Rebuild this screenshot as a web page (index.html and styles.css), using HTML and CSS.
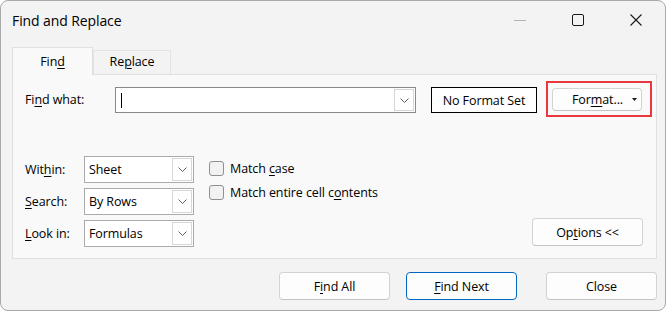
FILE: index.html
```html
<!DOCTYPE html>
<html lang="en">
<head>
    <meta charset="UTF-8">
    <title>Find and Replace</title>
    <link rel="stylesheet" href="styles.css">
</head>
<body>
    <div class="window">
        <div class="titlebar">
            <span class="title">Find and Replace</span>
            <div class="controls">
                <span class="ctl">
                    <svg width="12" height="12" viewBox="0 0 12 12"><path d="M0 6.5h12" stroke="#b4b4b4" stroke-width="1"/></svg>
                </span>
                <span class="ctl">
                    <svg width="12" height="12" viewBox="0 0 12 12"><rect x="0.5" y="0.5" width="11" height="11" rx="1.5" fill="none" stroke="#1a1a1a" stroke-width="1"/></svg>
                </span>
                <span class="ctl">
                    <svg width="12" height="12" viewBox="0 0 12 12"><path d="M0.5 0.5l11 11M11.5 0.5l-11 11" stroke="#1a1a1a" stroke-width="1.1"/></svg>
                </span>
            </div>
        </div>

        <div class="tabs">
            <div class="tab active">Fin<u>d</u></div>
            <div class="tab">Re<u>p</u>lace</div>
        </div>

        <div class="panel">
            <div class="find-row">
                <span class="find-label">Fi<u>n</u>d what:</span>
                <div class="combo">
                    <span class="caret"></span>
                    <span class="drop">
                        <svg width="9" height="5" viewBox="0 0 9 5"><path d="M0.5 0.5l4 4 4-4" fill="none" stroke="#606060" stroke-width="1"/></svg>
                    </span>
                </div>
                <div class="format-box">No Format Set</div>
                <div class="highlight">
                    <button class="btn format-btn">
                        <span>For<u>m</u>at...</span>
                        <svg width="5" height="3" viewBox="0 0 5 3"><path d="M0 0h5L2.5 3z" fill="#1a1a1a"/></svg>
                    </button>
                </div>
            </div>

            <div class="lower">
                <div class="option-grid">
                    <span class="opt-label">Wit<u>h</u>in:</span>
                    <div class="select">
                        <span class="select-value">Sheet</span>
                        <span class="drop">
                            <svg width="9" height="5" viewBox="0 0 9 5"><path d="M0.5 0.5l4 4 4-4" fill="none" stroke="#606060" stroke-width="1"/></svg>
                        </span>
                    </div>
                    <span class="opt-label"><u>S</u>earch:</span>
                    <div class="select">
                        <span class="select-value">By Rows</span>
                        <span class="drop">
                            <svg width="9" height="5" viewBox="0 0 9 5"><path d="M0.5 0.5l4 4 4-4" fill="none" stroke="#606060" stroke-width="1"/></svg>
                        </span>
                    </div>
                    <span class="opt-label"><u>L</u>ook in:</span>
                    <div class="select">
                        <span class="select-value">Formulas</span>
                        <span class="drop">
                            <svg width="9" height="5" viewBox="0 0 9 5"><path d="M0.5 0.5l4 4 4-4" fill="none" stroke="#606060" stroke-width="1"/></svg>
                        </span>
                    </div>
                </div>

                <div class="checks">
                    <label class="check"><span class="box"></span><span>Match <u>c</u>ase</span></label>
                    <label class="check"><span class="box"></span><span>Match entire cell c<u>o</u>ntents</span></label>
                </div>

                <button class="btn options-btn">Op<u>t</u>ions &lt;&lt;</button>
            </div>
        </div>

        <div class="actions">
            <button class="btn action-btn">F<u>i</u>nd All</button>
            <button class="btn action-btn primary"><u>F</u>ind Next</button>
            <button class="btn action-btn close-btn">Close</button>
        </div>
    </div>
</body>
</html>
```

FILE: styles.css
```css
* {
    box-sizing: border-box;
}
body {
    margin: 0;
    background: #ffffff;
    font-family: 'Segoe UI', 'Open Sans', sans-serif;
    font-size: 12.5px;
    letter-spacing: -0.1px;
    color: #000;
}
u {
    text-decoration: underline;
    text-underline-offset: 2px;
}
.window {
    width: 666px;
    height: 311px;
    background: #f3f3f3;
    border: 1px solid #a9a9a9;
    border-radius: 8px;
    display: flex;
    flex-direction: column;
}
.titlebar {
    height: 46px;
    display: flex;
    align-items: flex-start;
    justify-content: space-between;
}
.title {
    font-size: 14px;
    line-height: 20px;
    margin: 10px 0 0 11px;
}
.controls {
    display: flex;
    margin-top: 13px;
}
.ctl {
    width: 58px;
    height: 12px;
    display: flex;
    justify-content: center;
}
.tabs {
    display: flex;
    align-items: flex-end;
    margin-left: 11px;
    height: 27px;
}
.tab {
    width: 78px;
    text-align: center;
    line-height: 16px;
    padding: 3px 0 4px;
    border: 1px solid #e3e3e3;
    border-bottom: none;
    background: #f3f3f3;
}
.tab.active {
    position: relative;
    width: 81px;
    padding: 6px 0 5px;
    margin-bottom: -1px;
    background: #f9f9f9;
    border-color: #e0e0e0;
    z-index: 1;
}
.panel {
    margin: 0 8px 0 11px;
    background: #f9f9f9;
    border: 1px solid #e0e0e0;
    padding: 6px 0 11px 12px;
}
.find-row {
    display: flex;
    align-items: center;
    height: 36px;
}
.find-label {
    width: 90px;
}
.combo {
    width: 301px;
    height: 26px;
    margin-top: 2px;
    background: #fff;
    border: 1px solid #8a8a8a;
    display: flex;
    align-items: center;
    justify-content: space-between;
}
.caret {
    width: 1px;
    height: 15px;
    background: #000;
    margin-left: 5px;
}
.drop {
    width: 20px;
    align-self: stretch;
    margin: 1px;
    border: 1px solid #d6d6d6;
    background: #fff;
    display: flex;
    align-items: center;
    justify-content: center;
}
.format-box {
    width: 106px;
    height: 26px;
    margin: 2px 0 0 15px;
    background: #fff;
    border: 1px solid #000;
    display: flex;
    align-items: center;
    justify-content: center;
}
.highlight {
    width: 106px;
    height: 36px;
    margin-left: 9px;
    border: 2px solid #e8383d;
    padding: 5px 8px 4px 4px;
}
.btn {
    font-family: inherit;
    font-size: inherit;
    letter-spacing: inherit;
    color: #000;
    background: #fdfdfd;
    border: 1px solid #d3d3d3;
    border-bottom-color: #c4c4c4;
    border-radius: 4px;
    padding: 0;
}
.format-btn {
    width: 100%;
    height: 100%;
    display: flex;
    align-items: center;
    justify-content: space-between;
    padding: 0 4px 0 19px;
}
.lower {
    display: flex;
    align-items: flex-start;
    margin-top: 39px;
}
.option-grid {
    display: grid;
    grid-template-columns: 59px 110px;
    grid-auto-rows: 27px;
    row-gap: 5px;
    align-items: center;
}
.select {
    height: 27px;
    background: #fff;
    border: 1px solid #ababab;
    display: flex;
    align-items: center;
    justify-content: space-between;
}
.select-value {
    padding-left: 4px;
}
.checks {
    display: flex;
    flex-direction: column;
    gap: 5px;
    margin: 3px 0 0 15px;
}
.check {
    display: flex;
    align-items: center;
    gap: 6px;
    height: 19px;
}
.box {
    width: 15px;
    height: 15px;
    border: 1px solid #8f8f8f;
    border-radius: 3px;
    background: #f2f2f2;
}
.options-btn {
    width: 111px;
    height: 28px;
    margin: 62px 0 0 auto;
    margin-right: 13px;
}
.actions {
    display: flex;
    justify-content: flex-end;
    margin: 13px 8px 0 0;
}
.action-btn {
    width: 111px;
    height: 28px;
}
.action-btn.primary {
    margin: 0 29px 0 16px;
    border-color: #0067c0;
}
```
